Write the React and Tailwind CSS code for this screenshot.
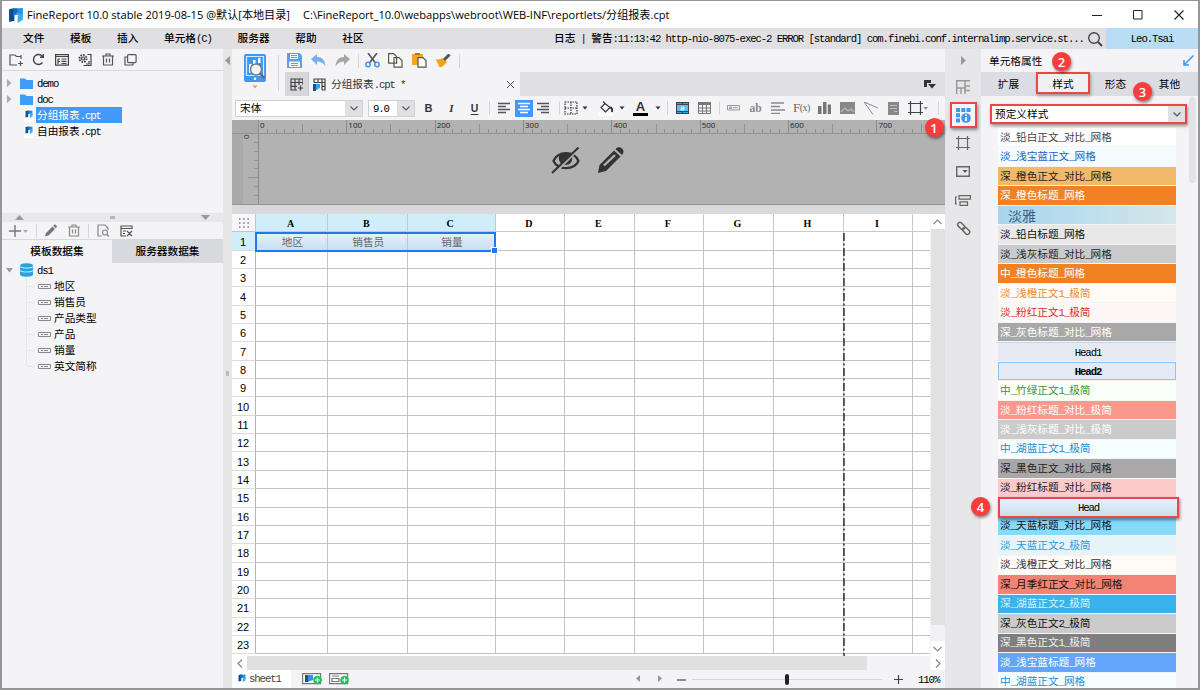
import React from "react";

const menus = ["文件", "模板", "插入", "单元格(C)", "服务器", "帮助", "社区"];

const files = [
    { name: "demo", folder: true },
    { name: "doc", folder: true },
    { name: "分组报表.cpt", active: true },
    { name: "自由报表.cpt" },
];

const fields = ["地区", "销售员", "产品类型", "产品", "销量", "英文简称"];

const columns = ["A", "B", "C", "D", "E", "F", "G", "H", "I", ""];
const rows = Array.from({ length: 23 }, (_, i) => i + 1);
const firstRow = ["地区", "销售员", "销量"];

const styles = [
    { name: "淡_铅白正文_对比_网格", cls: "bg-white text-[#444]" },
    { name: "淡_浅宝蓝正文_网格", cls: "bg-[#f5fbff] text-[#1b62c8]" },
    { name: "深_橙色正文_对比_网格", cls: "bg-[#f3b96b] text-[#222]" },
    { name: "深_橙色标题_网格", cls: "bg-[#f28124] text-white" },
    { name: "淡雅", cls: "bg-linear-to-r from-[#a6d6ee] to-[#d4e6ea] text-[#45607f] pl-[10px]! text-[14px]!" },
    { name: "淡_铅白标题_网格", cls: "bg-[#e8e8e8] text-[#111]" },
    { name: "淡_浅灰标题_对比_网格", cls: "bg-[#cbcbcb] text-[#222]" },
    { name: "中_橙色标题_网格", cls: "bg-[#f28124] text-white" },
    { name: "淡_浅橙正文1_极简", cls: "bg-[#fffaf5] text-[#f08a30]" },
    { name: "淡_粉红正文1_极简", cls: "bg-[#fff7f7] text-[#d93030]" },
    { name: "深_灰色标题_对比_网格", cls: "bg-[#a8a8a8] text-white" },
    { name: "Head1", cls: "bg-[#e6e9f1] text-black justify-center border-t border-[#bcdaf6]" },
    { name: "Head2", cls: "bg-[#e6e9f1] text-black justify-center font-bold border border-[#8fc3f5]" },
    { name: "中_竹绿正文1_极简", cls: "bg-[#fafffa] text-[#3f9440]" },
    { name: "淡_粉红标题_对比_极简", cls: "bg-[#f8998b] text-white" },
    { name: "淡_浅灰标题_对比_极简", cls: "bg-[#cbcbcb] text-white" },
    { name: "中_湖蓝正文1_极简", cls: "bg-[#f5fdff] text-[#1e8fd0]" },
    { name: "深_黑色正文_对比_网格", cls: "bg-[#a8a8a8] text-[#222]" },
    { name: "淡_粉红标题_对比_网格", cls: "bg-[#fdcaca] text-[#222]" },
    { name: "Head", cls: "bg-linear-to-b from-[#e8f1fb] to-[#c9dfe8] text-black justify-center", marked: true },
    { name: "淡_天蓝标题_对比_网格", cls: "bg-[#88dafc] text-[#111]" },
    { name: "淡_天蓝正文2_极简", cls: "bg-[#e6f4fa] text-[#2f9ad6]" },
    { name: "淡_浅橙正文_对比_网格", cls: "bg-[#fffaf6] text-[#333]" },
    { name: "深_月季红正文_对比_网格", cls: "bg-[#f38375] text-[#111]" },
    { name: "深_湖蓝正文2_极简", cls: "bg-[#3ab2ec] text-[#d5f2ff]" },
    { name: "深_灰色正文2_极简", cls: "bg-[#cbcbcb] text-[#111]" },
    { name: "深_黑色正文1_极简", cls: "bg-[#7f7f7f] text-[#eee]" },
    { name: "淡_浅宝蓝标题_网格", cls: "bg-[#62a5fb] text-white" },
    { name: "中_湖蓝正文_网格", cls: "bg-[#f5fdff] text-[#1e8fd0]" },
];

// Chinese keeps the full width, latin runs are set half as wide
const T = ({ children }) => (
    <span className="whitespace-pre">
        {children.split(/([\x20-\x7e]+)/).map((part, i) =>
            i % 2 ? (
                <span key={i} className="font-['Liberation_Mono'] tracking-[-1.1px]">{part}</span>
            ) : (
                part
            )
        )}
    </span>
);

const Icon = ({ w = 16, h = 16, color = "#555", sw = 1.2, className = "", children }) => (
    <svg width={w} height={h} viewBox={`0 0 ${w} ${h}`} fill="none" stroke={color} strokeWidth={sw} className={`shrink-0 ${className}`}>
        {children}
    </svg>
);

const Slot = ({ className, children }) => (
    <div className={`h-full flex items-center justify-center shrink-0 ${className}`}>{children}</div>
);

const Sep = () => <div className="w-px h-[14px] bg-[#d5d5d8]" />;

const Caret = ({ color = "#333" }) => (
    <Icon w={6} h={4} color="none"><path d="M0.5 0.5h5L3 3.5z" fill={color} /></Icon>
);

const Logo = ({ size = 15 }) => (
    <svg width={size} height={size} viewBox="0 0 15 15" className="shrink-0">
        <path d="M1 2l5-1v12l-5 1z" fill="#0f4a8c" />
        <path d="M5 1.500l9-.5v8l-4 2v-4l-5 1z" fill="#2e93e6" />
        <path d="M5 1.500l4 0v3l-4 4z" fill="#1668b0" />
        <path d="M9 8l5-2v6l-5 3z" fill="#35b0ea" />
    </svg>
);

const Badge = ({ n, className }) => (
    <div className={`absolute z-20 size-[19px] rounded-full bg-[#fa3c3c] text-white text-[13px] font-['Open_Sans'] font-semibold flex items-center justify-center shadow-[1px_2px_3px_rgba(0,0,0,0.45)] ${className}`}>
        {n}
    </div>
);

const TitleBar = () => (
    <div className="h-[27px] shrink-0 bg-white flex items-center text-black font-['Open_Sans','Noto_Sans_CJK_SC',sans-serif] text-[11.1px]">
        <div className="w-[25px] pl-[6px]"><Logo size={16} /></div>
        <div className="w-[276px] whitespace-nowrap">FineReport 10.0 stable 2019-08-15 @默认[本地目录]</div>
        <div className="whitespace-nowrap">C:\FineReport_10.0\webapps\webroot\WEB-INF\reportlets/分组报表.cpt</div>
        <div className="ml-auto flex items-center gap-[31px] pr-[14px]">
            <Icon w={10} h={10} color="#222" sw={1}><path d="M0 5.5h10" /></Icon>
            <Icon w={10} h={10} color="#222" sw={1}><path d="M.5 .5h8.5v8.5h-8.5z" /></Icon>
            <Icon w={10} h={10} color="#222" sw={1.1}><path d="M.5 .5l9 9M9.500 .5l-9 9" /></Icon>
        </div>
    </div>
);

const MenuBar = () => (
    <div className="h-[21px] shrink-0 bg-[#e0e0e3] flex items-center font-medium">
        <div className="flex gap-[25.7px] pl-[21px] w-[552px]">
            {menus.map((m) => <T key={m}>{m}</T>)}
        </div>
        <T>日志 | 警告:11:13:42 http-nio-8075-exec-2 ERROR [standard] com.finebi.conf.internalimp.service.st...</T>
        <div className="ml-auto flex h-full items-center">
            <Icon w={16} h={16} color="#444" sw={1.4} className="mr-[3px]">
                <circle cx="7" cy="7" r="5.3" /><path d="M11 11l4 4" strokeWidth="2" />
            </Icon>
            <div className="w-[92px] h-full bg-[#b7dcf3] flex items-center justify-center"><T>Leo.Tsai</T></div>
        </div>
    </div>
);

const LeftPanel = () => (
    <div className="w-[221px] shrink-0 flex flex-col bg-[#f4f4f7]">
        <div className="h-[22px] shrink-0 flex items-center pl-[2px] border-b border-[#d8d8db]">
            <Slot className="w-[23px]"><Icon w={14} h={14}><path d="M12 6V3.500H7.500L6 2H1v10h7M12 3.500V2M9 10.500h5M11.500 8v5" /></Icon></Slot>
            <Slot className="w-[23px]"><Icon w={13} h={13} color="#444" sw={1.4}><path d="M10.500 9.500a5 5 0 1 1 0-6M11.300 1v3.200H8" /></Icon></Slot>
            <Slot className="w-[23px]"><Icon w={14} h={13} color="#444"><path d="M.6 1.600h12.800v10.500H.6zM.6 3.500h12.800M3 6h2M3 6v5M3 8.500h2M6.500 6h5M6.500 8.300h5M6.500 10.500h5" /></Icon></Slot>
            <Slot className="w-[24px]"><Icon w={14} h={14} color="#444"><circle cx="5" cy="5.500" r="1.500" /><circle cx="5" cy="5.500" r="3.500" strokeDasharray="1.600 1.100" strokeWidth="2" /><path d="M9.500 1.500h3.500v11H5.500M8 11h3V8" /></Icon></Slot>
            <Slot className="w-[21px]"><Icon w={12} h={13} color="#555"><path d="M0 3h12M4 3V1h4v2M1.500 3v9h9V3M4.500 5.500v4M7.500 5.500v4" /></Icon></Slot>
            <Slot className="w-[25px]"><Icon w={13} h={13} color="#555"><rect x="3.600" y="1.600" width="8.500" height="8" rx="1" /><path d="M3.500 4H1v8h8V9.600" /></Icon></Slot>
        </div>
        <div className="h-[142px] shrink-0 pt-[4px]">
            {files.map((f) => (
                <div key={f.name} className="h-4 flex items-center">
                    <div className="w-[18px] pl-[5px]">
                        {f.folder && <Icon w={5} h={8} color="none"><path d="M0 0l4.500 4L0 8z" fill="#aaa" /></Icon>}
                    </div>
                    {f.folder ? (
                        <Icon w={13} h={11} color="none" className="mr-[4px]"><path d="M0 0.500h5l1.500 1.500H13v9H0z" fill="#409cf5" /></Icon>
                    ) : (
                        <div className="w-[17px] flex justify-center"><div className="bg-white w-[10px] h-[13px] flex items-start justify-center pt-px"><Logo size={8} /></div></div>
                    )}
                    <div className={f.active ? "bg-[#4199fa] text-white h-4 w-[86px] leading-4 pl-px -ml-px" : ""}><T>{f.name}</T></div>
                </div>
            ))}
        </div>
        <div className="h-[9px] shrink-0 bg-[#e8e8ea] flex items-center justify-between pl-[13px] pr-[13px]">
            <Icon w={9} h={5} color="none"><path d="M4.500 0L9 5H0z" fill="#999" /></Icon>
            <div className="w-[5px] h-[3px] bg-[#b5b5b8]" />
            <Icon w={9} h={5} color="none"><path d="M4.500 5L9 0H0z" fill="#999" /></Icon>
        </div>
        <div className="h-[18px] shrink-0 flex items-center border-b border-[#d8d8db]">
            <Slot className="w-[34px]"><Icon w={20} h={12} color="#777" sw={1.4}><path d="M0 6h12M6 0v12" /><path d="M14 5h5l-2.500 3z" fill="#aaa" stroke="none" /></Icon></Slot>
            <Sep />
            <Slot className="w-[27px]"><Icon w={12} h={13} color="none"><path d="M0 12.500l1-3.500L7.500 2.500l2.500 2.500-6.500 6.500zM8.200 1.800L10 .2 12.300 2.500l-1.600 1.800z" fill="#777" /></Icon></Slot>
            <Slot className="w-[20px]"><Icon w={12} h={13} color="#888"><path d="M0 3h12M4 3V1h4v2M1.500 3v9h9V3M4.500 5.500v4M7.500 5.500v4" /></Icon></Slot>
            <Slot className="w-[9px]"><Sep /></Slot>
            <Slot className="w-[20px]"><Icon w={13} h={13} color="#888"><path d="M5 12H1V1h7l3 3v2" /><circle cx="8" cy="8.500" r="2.500" /><path d="M10 10.500l2 2" /></Icon></Slot>
            <Slot className="w-[26px]"><Icon w={13} h={12} color="#555"><path d="M12 4V1H1v10h5M1 3.500h11M3 6h3M3 8.500h2M7 6l5 5M12 6l-5 5" /></Icon></Slot>
        </div>
        <div className="h-[23px] shrink-0 flex font-medium">
            <div className="w-[110px] flex items-center justify-center pb-[2px]"><T>模板数据集</T></div>
            <div className="flex-1 bg-[#d9dadf] flex items-center justify-center pb-[2px]"><T>服务器数据集</T></div>
        </div>
        <div className="flex-1 -mt-px">
            <div className="h-4 flex items-center">
                <div className="w-[18px] pl-[4px]"><Icon w={8} h={5} color="none"><path d="M0 0h7L3.500 4.500z" fill="#999" /></Icon></div>
                <Icon w={13} h={14} color="#f4f4f7" sw={0.9} className="mr-[4px]">
                    <path d="M0 2.500C0-.5 13-.5 13 2.500v9c0 3-13 3-13 0z" fill="#2aa2e2" stroke="none" />
                    <path d="M0 3.500c1 2 12 2 13 0M0 7.500c1 2 12 2 13 0" />
                </Icon>
                <T>ds1</T>
            </div>
            <div className="ml-[24px] border-l border-[#e6e6e9] h-[88px]">
                {fields.map((f) => (
                    <div key={f} className="h-4 flex items-center">
                        <div className="w-[8px] h-px bg-[#e6e6e9]" />
                        <Icon w={13} h={5} color="#888" sw={1} className="mx-[3px]"><path d="M.5 .5h12v4h-12zM3 2.500h2M6 2.500h4" /></Icon>
                        <T>{f}</T>
                    </div>
                ))}
            </div>
        </div>
    </div>
);

const TopTools = () => (
    <div className="flex h-[47px] shrink-0">
        <div className="w-[46px] flex flex-col items-center pt-[5px]">
            <Icon w={22} h={28} color="none">
                <rect width="22" height="28" rx="2" fill="#3d98f5" />
                <path d="M2.500 2.500h17v19h-17z" stroke="#d5ebff" />
                <path d="M5 10h2.500v9H5zM9 6h2.500v5H9zM14 4h2.500v5H14z" fill="#fff" />
                <circle cx="12" cy="15.500" r="5.500" fill="#eaf5ff" stroke="#777" strokeWidth="1.400" />
                <path d="M16 19.500l4.500 4.500" stroke="#666" strokeWidth="2.200" />
                <circle cx="11" cy="24.700" r="1.300" fill="#fff" />
            </Icon>
            <div className="mt-[3px]"><Caret color="#aaa" /></div>
        </div>
        <div className="w-[7px] flex items-center"><div className="w-px h-[36px] bg-[#d5d5d8]" /></div>
        <div className="flex-1 flex flex-col">
            <div className="h-[23px] flex items-center">
                <Slot className="w-[18px]"><Icon w={15} h={15} color="none"><path d="M0 0h12.500L15 2.500V15H0z" fill="#5a9fe8" /><path d="M3 1h8v5H3zM2 8.500h11V14H2z" fill="#f4f8fd" /><path d="M4 2.500h6M4 4.500h6M4 10.500h7M4 12.500h7" stroke="#5a9fe8" /></Icon></Slot>
                <Slot className="w-[30px]"><Icon w={15} h={13} color="none"><path d="M0 5L6 0v3c5 0 8 3 8.500 9.500C12.500 9 10 7.500 6 7.500V11z" fill="#74aef0" /></Icon></Slot>
                <Slot className="w-[18px]"><Icon w={15} h={13} color="none"><path d="M15 5L9 0v3C4 3 1 6 .5 12.500 2.500 9 5 7.500 9 7.500V11z" fill="#a5a5a5" /></Icon></Slot>
                <Slot className="w-[14px]"><Sep /></Slot>
                <Slot className="w-[14px]"><Icon w={15} h={15}><path d="M3 0l7.500 10M12 0L4.500 10" stroke="#555" strokeWidth="1.600" /><circle cx="3" cy="11.500" r="2.200" stroke="#3d98f5" strokeWidth="1.500" /><circle cx="12" cy="11.500" r="2.200" stroke="#3d98f5" strokeWidth="1.500" /></Icon></Slot>
                <Slot className="w-[33px]"><Icon w={15} h={15}><path d="M.6 .6h5l3 3v6.500h-8zM6 4.600h5l3 3v6.500H6z" fill="#fffdf0" /></Icon></Slot>
                <Slot className="w-[15px]"><Icon w={15} h={15}><path d="M0 1h11v11H0z" fill="#f5a623" stroke="none" /><path d="M3 1h5" stroke="#a87820" strokeWidth="2" /><path d="M6 4.600h5l3 3v6.500H6z" fill="#fffdf0" /></Icon></Slot>
                <Slot className="w-[32px]"><Icon w={15} h={14} color="none"><path d="M0 5c3 1 5 0 6-1l5 4c-2 2-3 4-7 5.500C2 12 3 10 1.500 9.500z" fill="#f2a31c" /><path d="M8 6l5.500-5.500" stroke="#555" strokeWidth="3" /></Icon></Slot>
                <Sep />
            </div>
            <div className="h-[24px] flex bg-[#e0e0e3]">
                <div className="w-[24px] bg-[#d6d7dc] border-r border-[#c6c6ca] flex items-center justify-center">
                    <Icon w={13} h={13} color="#444"><path d="M13 7V1H1v11h6M1 4.500h12M1 8.300h6M5 1v11M9 1v6M8 10h5M10.500 7.500v5" /></Icon>
                </div>
                <div className="w-[211px] bg-[#f4f4f7] flex items-center pl-[4px] text-[#333]">
                    <Icon w={13} h={13} color="#444"><path d="M1 4.500V1h11v11H9M1 4.500h11M9 8.300h3M5 1v4M9 1v11" /><path d="M0 6h3v7H0z" fill="#15538f" stroke="none" /><path d="M3 6h4v4l-4 2z" fill="#2ea3e6" stroke="none" /></Icon>
                    <span className="pl-[5px]"><T>分组报表.cpt *</T></span>
                    <Icon w={7} h={7} color="#555" sw={1} className="ml-auto mr-[6px]"><path d="M0 0l7 7M7 0L0 7" /></Icon>
                </div>
                <div className="ml-auto mr-[9px] flex items-center">
                    <Icon w={12} h={9} color="none"><path d="M0 0h7v3H3v4H0zM4 4h8L8 8.500z" fill="#333" /></Icon>
                </div>
            </div>
        </div>
    </div>
);

const Lines = ({ d, color = "#555" }) => <Icon w={14} h={12} color={color} sw={1.3}><path d={d} /></Icon>;

const Combo = ({ className, children }) => (
    <div className={`h-[17px] flex bg-white border border-[#d0d1d5] text-black ${className}`}>
        <div className="flex-1 pl-[4px] flex items-center"><T>{children}</T></div>
        <div className="w-[17px] bg-[#dfe0e4] flex items-center justify-center">
            <Icon w={8} h={5} color="#555" sw={1.1}><path d="M.5 .5L4 4 7.500 .5" /></Icon>
        </div>
    </div>
);

const FormatBar = () => (
    <div className="h-[24px] shrink-0 flex items-center pl-[3px] text-[#333]">
        <Combo className="w-[128px]">宋体</Combo>
        <Combo className="w-[47px] ml-[5px] mr-[2px]">9.0</Combo>
        <Slot className="w-[23px] font-['Liberation_Sans'] font-black text-[11px]">B</Slot>
        <Slot className="w-[23px] font-['Liberation_Serif'] font-bold italic text-[11px]">I</Slot>
        <Slot className="w-[23px] font-['Liberation_Sans'] font-bold underline underline-offset-2 text-[10.5px]">U</Slot>
        <Slot className="w-[7px]"><Sep /></Slot>
        <Slot className="w-[22px]"><Lines d="M1 1.500h12M1 4.500h8M1 7.500h12M1 10.500h8" /></Slot>
        <Slot className="w-[18px] h-[17px]! bg-[#3f98fa]"><Lines color="#fff" d="M1 1.500h12M3 4.500h8M1 7.500h12M3 10.500h8" /></Slot>
        <Slot className="w-[20px]"><Lines d="M1 1.500h12M5 4.500h8M1 7.500h12M5 10.500h8" /></Slot>
        <Slot className="w-[12px]"><Sep /></Slot>
        <Slot className="w-[12px]"><Icon w={14} h={14} color="#333"><path d="M1 1h12v12H1zM7 1v12M1 7h12" strokeDasharray="1.500 1" /></Icon></Slot>
        <Slot className="w-[16px]"><Caret /></Slot>
        <Slot className="w-[25px]"><Icon w={14} h={15} color="#333"><path d="M0 12h14v3H0z" fill="#fff" stroke="none" /><path d="M6 2.500l5 4-4.500 4.500L2 6.500zM4 .5l3 3" /><path d="M11 6.500c2 0 2.500 2 2 4.500" strokeWidth="2" /></Icon></Slot>
        <Slot className="w-[8px]"><Caret /></Slot>
        <Slot className="w-[29px]"><div className="w-[15px] border-b-3 border-black text-center font-['Liberation_Sans'] font-bold text-[13px] leading-[12px]">A</div></Slot>
        <Slot className="w-[5px]"><Caret /></Slot>
        <Slot className="w-[14px]"><Sep /></Slot>
        <Slot className="w-[16px]"><Icon w={13} h={12}><path d="M0 0h13v12H0z" fill="#444" stroke="none" /><path d="M1 3h11v6H1z" fill="#4cc4f5" stroke="none" /><path d="M1 1.500h11M1 10.500h11" stroke="#29a4df" strokeDasharray="5 1" /><path d="M5 5h3v3H5V6.500h3" stroke="#fff" strokeWidth=".8" /></Icon></Slot>
        <Slot className="w-[28px]"><Icon w={13} h={12} color="#777" sw={1}><path d="M.5 .5h12v11H.5zM.5 6h12M.5 9h12M4.500 .5v11M8.500 .5v11" /><path d="M0 0h13v3H0z" fill="#777" stroke="none" /></Icon></Slot>
        <Slot className="w-[2px]"><Sep /></Slot>
        <Slot className="w-[27px]"><Icon w={13} h={6} color="#999" sw={1}><path d="M.5 .5h12v4.500H.5zM2.500 2h2v1.500h-2zM6 2.700h5" /></Icon></Slot>
        <Slot className="w-[17px] font-['Liberation_Serif'] text-[11.5px] font-bold text-[#888]">ab</Slot>
        <Slot className="w-[28px]"><Lines color="#888" d="M0 1h13M0 4.500h9M0 8h14M0 11.300h9" /></Slot>
        <Slot className="w-[19px] font-['Liberation_Serif'] text-[13px] tracking-[-0.5px] text-[#666]">F<span className="text-[10px]">(x)</span></Slot>
        <Slot className="w-[26px]"><Icon w={13} h={12} color="none"><path d="M0 4h3.500v8H0zM5 0h3.500v12H5zM9.800 2.500H13V12H9.800z" fill="#777" /></Icon></Slot>
        <Slot className="w-[21px]"><Icon w={15} h={12} color="none"><path d="M0 0h15v12H0z" fill="#888" /><path d="M1 10l4-4 3 3 3-2 3 3" stroke="#bbb" /></Icon></Slot>
        <Slot className="w-[26px]"><Icon w={14} h={13} color="#888" sw={1}><path d="M0 0l14 6M0 0l9 12.500" /></Icon></Slot>
        <Slot className="w-[19px]"><Icon w={11} h={13} color="none"><path d="M0 0h11v13H0z" fill="#888" /><path d="M2 3.500h7M2 6.500h7M6 9.500h3" stroke="#bbb" /></Icon></Slot>
        <Slot className="w-[30px]"><Icon w={20} h={14} color="#444"><path d="M2.500 0v14M12.500 0v14M0 2.500h15M0 11.500h15" /><path d="M15.500 6h4.500l-2.200 2.800z" fill="#888" stroke="none" /></Icon></Slot>
        <Slot className="w-[10px]"><Sep /></Slot>
    </div>
);

const Canvas = () => (
    <div className="h-[94px] shrink-0 flex flex-col">
        <div className="h-[14px] flex bg-[#b2b2b2] overflow-hidden border-b border-[#949494]">
            <div className="w-[26px] shrink-0 bg-[#a9a9a9]" />
            {[0, 100, 200, 300, 400, 500, 600, 700].map((n) => (
                <div key={n} className="relative w-[88.35px] shrink-0 border-l border-[#8c8c8c] flex items-end">
                    <span className="absolute left-px -top-px text-[8px] leading-[12px] text-[#222] font-['Open_Sans']">{n}</span>
                    {[1, 2, 3, 4, 5, 6, 7, 8, 9].map((t) => (
                        <div key={t} className={`w-[8.83px] border-r border-[#929292] ${t === 5 ? "h-[9px]" : "h-[4px]"}`} />
                    ))}
                </div>
            ))}
        </div>
        <div className="h-[71px] flex bg-[#b2b2b2] border-b border-[#949494]">
            <div className="w-[27px] flex border-r border-[#8c8c8c]">
                <div className="w-[11px] bg-[#a9a9a9]" />
                <div className="flex-1 flex flex-col items-end">
                    <span className="self-start pl-[1px] h-0 text-[8px] leading-[6px] text-[#222] font-['Open_Sans'] -rotate-90 origin-[3px_3px]">0</span>
                    {[1, 2, 3, 4, 5, 6, 7].map((t) => (
                        <div key={t} className={`h-[8.85px] border-b border-[#929292] ${t === 5 ? "w-[10px]" : "w-[4px]"}`} />
                    ))}
                </div>
            </div>
            <div className="flex-1 flex items-start gap-[16px] pl-[292px] pt-[13px]">
                <Icon w={30} h={28} color="#333" sw={2.2}>
                    <path d="M2.500 14C7 3.500 23 3.500 27.500 14 23 23.500 7 23.500 2.500 14z" />
                    <path d="M8 9c4-4 10-4 13 0 1 6-2 9-6.500 9S7 14 8 9z" fill="#333" stroke="none" />
                    <path d="M2.500 27L29 0" stroke="#b2b2b2" strokeWidth="3" />
                    <path d="M1 26L27.500 .5" strokeWidth="2" />
                </Icon>
                <Icon w={28} h={28} color="none">
                    <path d="M1 26l1.500-8L17 3.500 23.500 9.500 9 24zM18.500 2.200c2-2.500 4.500-2.500 6.500-.6s2 4 .1 6.400z" fill="#333" />
                    <path d="M7 18.500L18 8" stroke="#b2b2b2" strokeWidth="2.400" />
                </Icon>
            </div>
        </div>
        <div className="flex-1 bg-[#d9d9dc]" />
    </div>
);

const Sheet = () => (
    <div className="h-[442px] shrink-0 flex">
        <div className="relative w-[698px] bg-white overflow-hidden text-black">
            <div className="grid grid-cols-[24px_72px_79.5px_88px_69.5px_69.5px_69.5px_70px_70px_69px_17.5px] auto-rows-[18.35px]">
                <div className="border-r border-b border-[#c4c4c4] bg-[#f7f7f9] flex items-center justify-center h-[18.35px] pl-px">
                    <Icon w={10} h={10} color="#777" sw={1.4}><path d="M0 1h10M0 5h10M0 9h10" strokeDasharray="1.500 2.700" /></Icon>
                </div>
                {columns.map((c, i) => (
                    <div key={i} className={`border-r border-b border-[#c9c9c9] flex items-center justify-center pt-[2px] pr-[2px] font-['Liberation_Serif'] font-bold text-[10px] ${i < 3 ? "bg-[#cfeefa]" : ""}`}>{c}</div>
                ))}
                {rows.map((r) => (
                    <React.Fragment key={r}>
                        <div className={`border-r border-b border-r-[#b5b5b5] border-b-[#dcdcdc] flex items-center justify-center pr-px pt-px font-['Liberation_Sans'] text-[11px] ${r === 1 ? "bg-[#cfeefa]" : ""}`}>{r}</div>
                        {columns.map((c, i) => (
                            <div key={i} className={`border-r border-b border-[#c4c4c4] flex items-center justify-center pl-[2px] pt-px text-[#666] ${r === 1 && i < 3 ? "bg-linear-to-b from-[#e8f2fc] to-[#c9def0]" : ""}`}>
                                {r === 1 && firstRow[i]}
                            </div>
                        ))}
                    </React.Fragment>
                ))}
            </div>
            {/* selection frame with its drag handle */}
            <div className="absolute left-[23px] top-[18px] w-[241px] h-[20px] border-2 border-[#1f78ee]">
                <div className="absolute -right-[3px] -bottom-[3px] size-[5px] bg-[#1f78ee] outline outline-white" />
            </div>
            {/* page break */}
            <svg className="absolute left-[611px] top-[19px]" width="2" height="423">
                <path d="M1 0v423" stroke="#111" strokeWidth="1.300" strokeDasharray="8 2.500 2 2.500" />
            </svg>
        </div>
        <div className="flex-1 flex flex-col items-center bg-[#f2f2f5]">
            <div className="h-[15px] w-[14px] bg-white flex items-center justify-center"><Icon w={9} h={6} color="#888"><path d="M.5 5L4.500 1l4 4" /></Icon></div>
            <div className="w-[14px] h-[396px] bg-[#e1e1e1]" />
            <div className="mt-auto h-[15px] w-[14px] bg-white flex items-center justify-center"><Icon w={9} h={6} color="#888"><path d="M.5 1L4.500 5l4-4" /></Icon></div>
        </div>
    </div>
);

const StatusBar = () => (
    <div className="flex-1 flex flex-col bg-[#f4f4f7]">
        <div className="h-[14px] flex">
            <div className="w-[15px] bg-white flex items-center justify-center"><Icon w={6} h={9} color="#888"><path d="M5 .5L1 4.500l4 4" /></Icon></div>
            <div className="w-[620px] bg-[#e0e0e0]" />
            <div className="ml-auto w-[14px] bg-white flex items-center justify-center"><Icon w={6} h={9} color="#888"><path d="M1 .5l4 4-4 4" /></Icon></div>
        </div>
        <div className="flex-1 flex items-center">
            <div className="w-[59px] h-full bg-white flex items-center gap-[3px] pl-[6px] pb-[2px] text-[#444]"><Logo size={8} /><T>sheet1</T></div>
            <div className="flex gap-[7px] pl-[11px]">
                <Icon w={20} h={12} color="#777"><path d="M.6 .6h18v10H.6z" fill="#fff" /><path d="M3 2h3v7H3z" fill="#15538f" stroke="none" /><path d="M6 2h5v5l-3 1-2 1z" fill="#2e93e6" stroke="none" /><circle cx="15.500" cy="7" r="4.300" fill="#1fbf5a" stroke="none" /><path d="M13 7h5M15.500 4.500v5" stroke="#fff" /></Icon>
                <Icon w={20} h={12} color="#777"><path d="M.6 .6h18v10H.6z" fill="#fff" /><path d="M3 3h7M3 5.500h7v3H3z" /><circle cx="15.500" cy="7" r="4.300" fill="#1fbf5a" stroke="none" /><path d="M13 7h5M15.500 4.500v5" stroke="#fff" /></Icon>
            </div>
            <div className="flex items-center ml-[287px] gap-[17px]">
                <Icon w={5} h={8} color="none"><path d="M4 0v7L0 3.500z" fill="#999" /></Icon>
                <Icon w={5} h={8} color="none"><path d="M0 0v7l4-3.500z" fill="#999" /></Icon>
            </div>
            <Icon w={9} h={9} color="#444" className="ml-[14px] mr-[6px]"><path d="M0 5h9" /></Icon>
            <div className="w-[190px] h-px bg-[#d5d5d8] flex items-center justify-center"><div className="w-[4px] h-[11px] rounded-sm bg-[#222] shrink-0" /></div>
            <Icon w={9} h={9} color="#444" className="ml-[12px] mr-[15px]"><path d="M0 4.500h9M4.500 0v9" /></Icon>
            <T>110%</T>
        </div>
    </div>
);

const SideStrip = () => (
    <div className="relative w-[36px] shrink-0 bg-[#e7e7e9] flex flex-col items-center">
        <Slot className="h-[22px]!"><Icon w={5} h={9} color="none"><path d="M0 0l5 4.500L0 9z" fill="#999" /></Icon></Slot>
        <Slot className="h-[31px]!"><Icon w={14} h={14} color="#999" sw={1.4}><path d="M.7 14V.7H14M.7 8H10M5 8v6M9 .7V14M9 6h5M9 10.500h5" /></Icon></Slot>
        <div className="relative w-[27px] h-[26px] bg-[#f4f4f7] border-2 border-[#f04545] shadow-[1px_2px_3px_rgba(0,0,0,0.4)] flex items-center justify-center">
            <Icon w={15} h={15} color="none">
                <path d="M0 0h4v4H0zM5.300 0h4v4h-4zM10.600 0h4v4h-4zM0 5.300h4v4H0zM0 10.600h4v4H0z" fill="#3d98f5" />
                <circle cx="10" cy="10" r="4.800" fill="#3d98f5" />
                <path d="M10 9v4M10 6.500v1.500" stroke="#fff" strokeWidth="1.800" />
            </Icon>
            <Badge n={1} className="-left-[27px] top-[14px]" />
        </div>
        <Slot className="h-[29px]!"><Icon w={14} h={14} color="#666"><path d="M2.500 0v14M11.500 0v14M0 2.500h14M0 11.500h14" /></Icon></Slot>
        <Slot className="h-[29px]!"><Icon w={14} h={11} color="#666" sw={1.4}><path d="M.7 .7h12.600v9.600H.7z" /><path d="M6.500 4h5L9 7z" fill="#555" stroke="none" /></Icon></Slot>
        <Slot className="h-[28px]!"><Icon w={16} h={11} color="#666" sw={1.2}><path d="M4 .6h11.400v3.500H4zM5 6.800h7.500v3.500H5zM2 2H.6v7H2" /></Icon></Slot>
        <Slot className="h-[28px]!"><Icon w={15} h={15} color="#666" sw={1.5}><rect x="1" y="2.500" width="8" height="4.500" rx="2.200" transform="rotate(45 5 5)" /><rect x="6" y="7.500" width="8" height="4.500" rx="2.200" transform="rotate(45 10 10)" /></Icon></Slot>
    </div>
);

const PropertyPanel = () => (
    <div className="relative flex-1 flex flex-col bg-[#f4f4f7] text-black">
        <div className="h-[23px] shrink-0 flex items-center justify-between pl-[8px] pr-[4px]">
            <T>单元格属性</T>
            <Icon w={11} h={11} color="#3d98f5" sw={1.5}><path d="M10.500 .5L2 9M1 5v5h5" /></Icon>
        </div>
        <div className="h-[24px] shrink-0 flex bg-[#dcdde2]">
            <div className="w-[55px] flex items-center justify-center">扩展</div>
            <div className="w-[54px] bg-[#f0f0f3] border-2 border-[#f04545] mb-[2px] shadow-[1px_2px_3px_rgba(0,0,0,0.3)] flex items-center justify-center pt-px">样式</div>
            <div className="w-[51px] flex items-center justify-center">形态</div>
            <div className="flex-1 flex items-center justify-center">其他</div>
        </div>
        <div className="relative shrink-0 ml-[9px] mt-[8px] w-[197px] h-[20px] bg-white border-2 border-[#f04545] shadow-[1px_2px_3px_rgba(0,0,0,0.4)] flex">
            <div className="flex-1 flex items-center pl-[3px]">预定义样式</div>
            <div className="w-[17px] bg-[#dfe0e4] flex items-center justify-center"><Icon w={8} h={5} color="#555"><path d="M.5 .5L4 4 7.500 .5" /></Icon></div>
        </div>
        <div className="ml-[17px] mt-[4px] w-[179px]">
            {styles.map((s) => (
                <div key={s.name} className="h-[19.49px] pb-px">
                    {s.marked ? (
                        <div className={`relative -mt-px w-[181px] h-[21px] border-2 border-[#f04545] shadow-[1px_2px_3px_rgba(0,0,0,0.45)] flex items-center ${s.cls}`}>
                            <T>{s.name}</T>
                            <Badge n={4} className="-left-[29px] -top-[2px]" />
                        </div>
                    ) : (
                        <div className={`h-full w-[178px] flex items-center pl-[2px] ${s.cls}`}><T>{s.name}</T></div>
                    )}
                </div>
            ))}
        </div>
        <div className="absolute right-[2px] top-[48px] w-[7px] h-[86px] rounded bg-[#e3e3e5]" />
        <Badge n={2} className="left-[71px] top-[3px]" />
        <Badge n={3} className="left-[152px] top-[33px]" />
    </div>
);

const App = () => {
    return (
        <div className="w-[1200px] h-[690px] overflow-hidden bg-[#f4f4f7] border-2 border-t-1 border-[#969696] flex flex-col text-black text-[10.67px] leading-[14px] font-['Noto_Sans_CJK_SC',sans-serif]">
            <TitleBar />
            <MenuBar />
            <div className="flex-1 flex min-h-0">
                <LeftPanel />
                <div className="w-[9px] shrink-0 bg-[#e6e6e6] flex flex-col items-center justify-between pt-[7px] pb-[312px]">
                    <Icon w={5} h={9} color="none"><path d="M5 0v9L0 4.500z" fill="#999" /></Icon>
                    <div className="w-[3px] h-[5px] bg-[#bbb]" />
                </div>
                <div className="w-[713px] shrink-0 flex flex-col">
                    <TopTools />
                    <FormatBar />
                    <Canvas />
                    <Sheet />
                    <StatusBar />
                </div>
                <SideStrip />
                <PropertyPanel />
            </div>
        </div>
    );
};

export default App;
